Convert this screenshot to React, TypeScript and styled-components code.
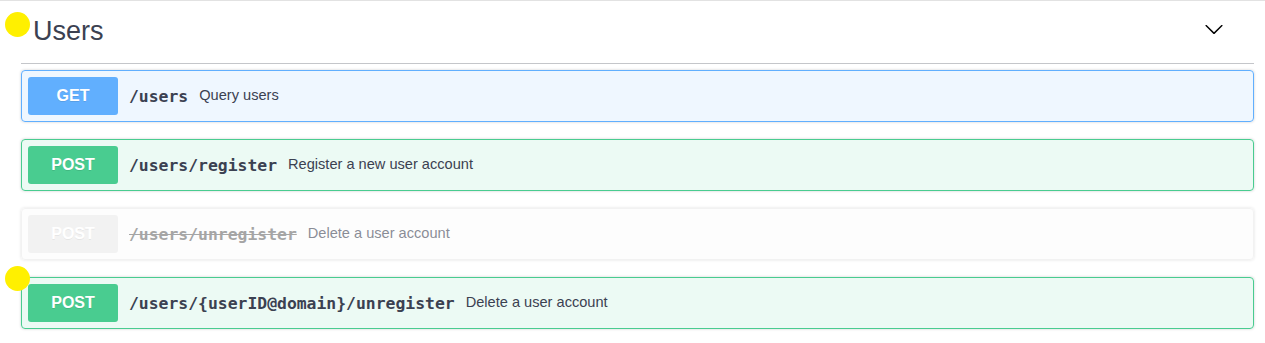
import React from 'react'
import styled, { createGlobalStyle } from 'styled-components'

type Method = 'get' | 'post' | 'deprecated'

interface Operation {
    method: Method;
    label: string;
    path: string;
    summary: string;
}

const operations: Operation[] = [
    { method: 'get', label: 'GET', path: '/users', summary: 'Query users' },
    { method: 'post', label: 'POST', path: '/users/register', summary: 'Register a new user account' },
    { method: 'deprecated', label: 'POST', path: '/users/unregister', summary: 'Delete a user account' },
    { method: 'post', label: 'POST', path: '/users/{userID@domain}/unregister', summary: 'Delete a user account' },
]

const palette = {
    get: { main: '#61affe', bg: 'rgba(97, 175, 254, 0.1)' },
    post: { main: '#49cc90', bg: 'rgba(73, 204, 144, 0.1)' },
    deprecated: { main: '#ebebeb', bg: 'rgba(235, 235, 235, 0.1)' },
}

const App = () => {

    return (
        <Page>
            <GlobalStyle />
            <Section>
                <TagHeader>
                    <TagTitle>Users</TagTitle>
                    <Toggle aria-label="collapse">
                        <svg width="20" height="20" viewBox="0 0 20 20" fill="#000">
                            <path d="M17.418 6.109c.272-.268.709-.268.979 0s.271.701 0 .969l-7.908 7.83c-.27.268-.707.268-.979 0l-7.908-7.83c-.27-.268-.27-.701 0-.969.271-.268.709-.268.979 0L10 13.25l7.418-7.141z" />
                        </svg>
                    </Toggle>
                </TagHeader>
                <OpList>
                    {operations.map((op, i) => (
                        <OpBlock key={i} method={op.method}>
                            <MethodBadge method={op.method}>{op.label}</MethodBadge>
                            <OpPath deprecated={op.method === 'deprecated'}>{op.path}</OpPath>
                            <OpSummary>{op.summary}</OpSummary>
                        </OpBlock>
                    ))}
                </OpList>
            </Section>
            <Marker top={12} />
            <Marker top={266} />
        </Page>
    )

}
export default App;

const GlobalStyle = createGlobalStyle`
    body {
        margin: 0;
        background: #fff;
        font-family: 'Liberation Sans', Arial, sans-serif;
    }
`;

const Page = styled.div`
    position: relative;
    width: 1265px;
    height: 343px;
    overflow: hidden;
`;

const Section = styled.div`
    border-top: 1px solid #e2e2e2;
    padding: 0 11px 0 21px;
`;

const TagHeader = styled.div`
    height: 58px;
    padding-bottom: 4px;
    display: flex;
    align-items: center;
    justify-content: space-between;
    border-bottom: 1px solid rgba(59, 65, 81, 0.3);
`;

const TagTitle = styled.h3`
    margin: 2px 0 0 12px;
    font-size: 27px;
    font-weight: normal;
    color: #3b4151;
`;

const Toggle = styled.button`
    display: flex;
    padding: 0;
    margin: 0 30px 2px 0;
    border: none;
    background: none;
`;

const OpList = styled.div`
    padding-top: 6px;
    display: flex;
    flex-direction: column;
    gap: 17px;
`;

interface MethodProps {
    method: Method;
}
const OpBlock = styled.div<MethodProps>`
    height: 38px;
    padding: 6px;
    display: flex;
    align-items: center;
    border: 1px solid ${({method}) => palette[method].main};
    background: ${({method}) => palette[method].bg};
    border-radius: 4px;
    box-shadow: 0 0 3px rgba(0, 0, 0, 0.19);
    opacity: ${({method}) => method === 'deprecated' ? 0.6 : 1};
`;

const MethodBadge = styled.span<MethodProps>`
    width: 90px;
    height: 38px;
    display: flex;
    align-items: center;
    justify-content: center;
    border-radius: 3px;
    background: ${({method}) => palette[method].main};
    color: #fff;
    font-size: 16px;
    font-weight: bold;
    text-shadow: 0 1px 0 rgba(0, 0, 0, 0.1);
`;

interface PathProps {
    deprecated?: boolean;
}
const OpPath = styled.span<PathProps>`
    margin-left: 11px;
    font-family: 'DejaVu Sans Mono', monospace;
    font-size: 16.4px;
    font-weight: bold;
    color: ${({deprecated}) => deprecated ? '#6b6b6b' : '#3b4151'};
    text-decoration: ${({deprecated}) => deprecated ? 'line-through' : 'none'};
`;

const OpSummary = styled.span`
    margin-left: 11px;
    margin-bottom: 2px;
    font-size: 14.6px;
    color: #3b4151;
`;

interface MarkerProps {
    top: number;
}
const Marker = styled.div<MarkerProps>`
    position: absolute;
    left: 5px;
    top: ${({top}) => top}px;
    width: 25px;
    height: 25px;
    border-radius: 50%;
    background: #fff000;
`;
